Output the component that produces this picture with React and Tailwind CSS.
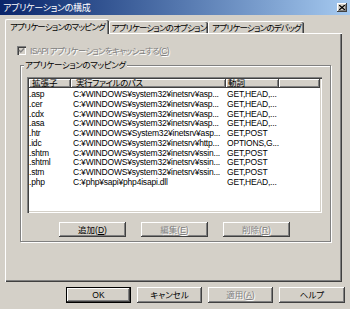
import clsx from 'clsx';

const raised =
  'bg-[#d4d0c8] shadow-[inset_-1px_-1px_0_#404040,inset_1px_1px_0_#fff,inset_-2px_-2px_0_#808080]';
const grayed = 'text-[#808080] [text-shadow:1px_1px_0_#fff]';

const rows = [
  ['.asp', 'C:¥WINDOWS¥system32¥inetsrv¥asp...', 'GET,HEAD,...'],
  ['.cer', 'C:¥WINDOWS¥system32¥inetsrv¥asp...', 'GET,HEAD,...'],
  ['.cdx', 'C:¥WINDOWS¥system32¥inetsrv¥asp...', 'GET,HEAD,...'],
  ['.asa', 'C:¥WINDOWS¥system32¥inetsrv¥asp...', 'GET,HEAD,...'],
  ['.htr', 'C:¥WINDOWS¥System32¥inetsrv¥asp...', 'GET,POST'],
  ['.idc', 'C:¥WINDOWS¥system32¥inetsrv¥http...', 'OPTIONS,G...'],
  ['.shtm', 'C:¥WINDOWS¥system32¥inetsrv¥ssin...', 'GET,POST'],
  ['.shtml', 'C:¥WINDOWS¥system32¥inetsrv¥ssin...', 'GET,POST'],
  ['.stm', 'C:¥WINDOWS¥system32¥inetsrv¥ssin...', 'GET,POST'],
  ['.php', 'C:¥php¥sapi¥php4isapi.dll', 'GET,HEAD,...'],
];

const Btn = ({ label, accel, disabled, def, className }) => (
  <div
    className={clsx(
      'flex items-center justify-center whitespace-nowrap',
      def
        ? 'bg-[#d4d0c8] border border-black shadow-[inset_-1px_-1px_0_#404040,inset_1px_1px_0_#fff,inset_-2px_-2px_0_#808080]'
        : raised,
      disabled && grayed,
      className
    )}
  >
    {label}
    {accel && (
      <>
        (<span className="underline">{accel}</span>)
      </>
    )}
  </div>
);

const Tab = ({ children, active, className }) => (
  <div
    className={clsx(
      'flex items-center justify-center whitespace-nowrap tracking-[-0.8px] rounded-t-[2px] border-t border-l border-white bg-[#d4d0c8] shadow-[inset_-1px_0_0_#404040,inset_-2px_0_0_#808080]',
      active ? 'h-[15px] -mb-px relative z-10' : 'h-[12px]',
      className
    )}
  >
    {children}
  </div>
);

export default function App() {
  return (
    <div className="w-[350px] h-[309px] bg-[#d4d0c8] overflow-hidden flex flex-col text-[8.5px] leading-[10px] text-black font-['Liberation_Sans','Noto_Sans_CJK_JP',sans-serif] [font-feature-settings:'palt']">
      {/* title bar */}
      <div className="h-[15px] flex items-center justify-between pl-[3px] pr-[3px] bg-linear-to-r from-[#0a246a] to-[#a6caf0]">
        <span className="text-white text-[9px] tracking-[-0.3px]">アプリケーションの構成</span>
        <div className={clsx('w-[10px] h-[9px] flex items-center justify-center', raised)}>
          <svg width="6" height="5" viewBox="0 0 6 5">
            <path d="M0 0L6 5M6 0L0 5" stroke="#000" strokeWidth="1.3" />
          </svg>
        </div>
      </div>

      {/* tabs */}
      <div className="mt-[4px] h-[14px] flex items-end pl-[5px]">
        <Tab active className="w-[104px]">アプリケーションのマッピング</Tab>
        <Tab className="w-[99px]">アプリケーションのオプション</Tab>
        <Tab className="w-[96px]">アプリケーションのデバッグ</Tab>
      </div>

      {/* panel */}
      <div className="ml-[5px] w-[337px] h-[249px] border-t border-l border-white shadow-[inset_-1px_-1px_0_#404040,inset_-2px_-2px_0_#808080] pl-[11px] pt-[12px]">
        <div className="flex items-center h-[9px] gap-[4px]">
          <div className="w-[9px] h-[9px] bg-[#d4d0c8] shadow-[inset_1px_1px_0_#808080,inset_2px_2px_0_#404040,inset_-1px_-1px_0_#fff] flex items-center justify-center">
            <svg width="7" height="7" viewBox="0 0 7 7">
              <path d="M1 3L2.8 5L6 1.5" stroke="#808080" strokeWidth="1.4" fill="none" />
            </svg>
          </div>
          <span className={clsx('whitespace-nowrap tracking-[-0.7px]', grayed)}>
            ISAPI アプリケーションをキャッシュする(<span className="underline">C</span>)
          </span>
        </div>

        {/* group box */}
        <div className="relative mt-[10px] ml-[3px] w-[311px] h-[177px] border border-[#808080] shadow-[1px_1px_0_#fff,inset_1px_1px_0_#fff]">
          <span className="absolute left-[3px] -top-[6px] px-px bg-[#d4d0c8] whitespace-nowrap tracking-[-0.4px]">
            アプリケーションのマッピング
          </span>

          {/* list */}
          <div className="mt-[11px] ml-[6px] w-[295px] h-[136px] p-[2px] bg-white shadow-[inset_1px_1px_0_#808080,inset_2px_2px_0_#404040,inset_-1px_-1px_0_#fff,inset_-2px_-2px_0_#d4d0c8]">
            <div className="flex h-[9px] leading-[9px] whitespace-nowrap">
              <div className={clsx('w-[42px] pl-[3px]', raised)}>拡張子</div>
              <div className={clsx('w-[155px] pl-[5px] tracking-[-0.4px]', raised)}>実行ファイルのパス</div>
              <div className={clsx('w-[53px] pl-[2px]', raised)}>動詞</div>
              <div className={clsx('flex-1', raised)} />
            </div>
            <div className="pt-[2px] tracking-[-0.2px]">
              {rows.map(([ext, path, verb]) => (
                <div key={ext} className="flex h-[9.75px] leading-[9.75px] whitespace-nowrap">
                  <div className="w-[42px] overflow-hidden">{ext}</div>
                  <div className="w-[155px] pl-[2px] overflow-hidden">{path}</div>
                  <div className="w-[53px] pl-[1px] overflow-hidden">{verb}</div>
                </div>
              ))}
            </div>
          </div>

          <div className="mt-[9px] ml-[38px] flex gap-[15px]">
            <Btn label="追加" accel="D" className="w-[67px] h-[15px]" />
            <Btn label="編集" accel="E" disabled className="w-[67px] h-[15px]" />
            <Btn label="削除" accel="R" disabled className="w-[67px] h-[15px]" />
          </div>
        </div>
      </div>

      {/* dialog buttons */}
      <div className="mt-[5px] ml-[66px] flex gap-[6px]">
        <Btn label="OK" def className="w-[65px] h-[16px]" />
        <Btn label="キャンセル" className="w-[65px] h-[16px]" />
        <Btn label="適用" accel="A" disabled className="w-[65px] h-[16px]" />
        <Btn label="ヘルプ" className="w-[66px] h-[16px]" />
      </div>
    </div>
  );
}
